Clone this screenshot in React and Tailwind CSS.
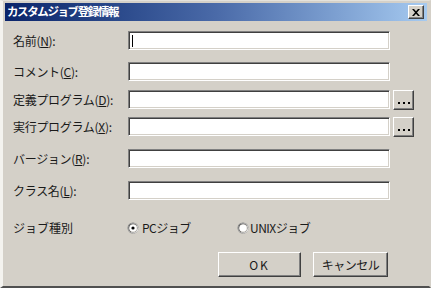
import React from "react";

const FONT = { fontFamily: '"Noto Sans CJK JP", "Noto Sans", sans-serif' };

function Field({ label, mnemonic, after, mt, browse, caret }) {
  return (
    <div className={`flex items-center h-[19px] ${mt}`}>
      <div className="w-[115px] text-[12px] leading-none text-[#1a1a1a] whitespace-nowrap tracking-[-0.3px]">
        {label}(<span className="underline underline-offset-1">{mnemonic}</span>){after}
      </div>
      <div className="relative w-[262px] h-[19px] bg-white border border-t-[#808080] border-l-[#808080] border-b-white border-r-white shadow-[inset_1px_1px_0_#404040,inset_-1px_-1px_0_#d4d0c8]">
        {caret && <div className="absolute left-[3px] top-[3px] w-px h-[12px] bg-black" />}
      </div>
      {browse && (
        <div className="ml-[3px] w-[21px] h-[20px] flex items-end justify-center pb-[5px] border border-t-white border-l-white border-b-[#404040] border-r-[#404040] shadow-[inset_-1px_-1px_0_#808080]">
          <div className="flex gap-[3px]">
            <div className="w-[2px] h-[2px] bg-black" />
            <div className="w-[2px] h-[2px] bg-black" />
            <div className="w-[2px] h-[2px] bg-black" />
          </div>
        </div>
      )}
    </div>
  );
}

function Radio({ checked }) {
  return (
    <svg width="12" height="12" viewBox="0 0 12 12" className="shrink-0">
      <circle cx="6" cy="6" r="5.5" fill="#808080" />
      <circle cx="6.3" cy="6.3" r="5" fill="#ffffff" />
      <circle cx="6" cy="6" r="4.6" fill="#404040" />
      <circle cx="6.3" cy="6.3" r="4" fill="#d4d0c8" />
      <circle cx="6" cy="6" r="3.6" fill="#ffffff" />
      {checked && <circle cx="6" cy="6" r="1.6" fill="#000" />}
    </svg>
  );
}

export default function App() {
  return (
    <div className="w-[431px] h-[291px] bg-white" style={FONT}>
      <div className="w-[431px] h-[288px] bg-[#d4d0c8] border-l-[3px] border-l-[#f4f3ef] border-t border-t-[#e4e2dc] border-r-[2px] border-r-[#d4d0c8] border-b-[2px] border-b-[#505050] flex flex-col">
        <div className="mt-[2px] ml-[2px] mr-[2px] h-[18px] bg-linear-to-r from-[#0a246a] via-[#4a6aa8] to-[#a6caf0] flex items-center justify-between pl-[2px] pr-[3px]">
          <span className="text-white text-[11.5px] font-bold leading-none tracking-[-1.4px]">
            カスタムジョブ登録情報
          </span>
          <div className="w-[16px] h-[14px] bg-[#d4d0c8] border border-t-white border-l-white border-b-[#404040] border-r-[#404040] shadow-[inset_-1px_-1px_0_#808080] flex items-center justify-center">
            <svg width="8" height="7" viewBox="0 0 8 7">
              <path d="M0 0h2l2 2.2L6 0h2L5 3.5 8 7H6L4 4.8 2 7H0l3-3.5z" fill="#000" />
            </svg>
          </div>
        </div>

        <div className="pl-[10px] flex flex-col">
          <Field label="名前" mnemonic="N" after=":" mt="mt-[10px]" caret />
          <Field label="コメント" mnemonic="C" after=":" mt="mt-[12px]" />
          <Field label="定義プログラム" mnemonic="D" after=":" mt="mt-[9px]" browse />
          <Field label="実行プログラム" mnemonic="X" after=":" mt="mt-[8px]" browse />
          <Field label="バージョン" mnemonic="R" after=":" mt="mt-[13px]" />
          <Field label="クラス名" mnemonic="L" after=":" mt="mt-[13px]" />

          <div className="flex items-center h-[14px] mt-[21px] text-[12px] leading-none text-[#1a1a1a]">
            <div className="w-[114px]">ジョブ種別</div>
            <div className="w-[110px] flex items-center gap-[3px]">
              <Radio checked />
              <span className="tracking-[-0.5px]">PCジョブ</span>
            </div>
            <div className="flex items-center gap-[1px]">
              <Radio />
              <span className="tracking-[-0.5px]">UNIXジョブ</span>
            </div>
          </div>
        </div>

        <div className="flex mt-[17px] ml-[215px] gap-[12px]">
          <div className="w-[83px] h-[25px] flex items-center justify-center text-[12px] tracking-[2px] text-[#1a1a1a] border border-t-white border-l-white border-b-[#404040] border-r-[#404040] shadow-[inset_-1px_-1px_0_#808080]">
            OK
          </div>
          <div className="w-[75px] h-[25px] flex items-center justify-center text-[12px] text-[#1a1a1a] tracking-[-0.5px] border border-t-white border-l-white border-b-[#404040] border-r-[#404040] shadow-[inset_-1px_-1px_0_#808080]">
            キャンセル
          </div>
        </div>
      </div>
    </div>
  );
}
